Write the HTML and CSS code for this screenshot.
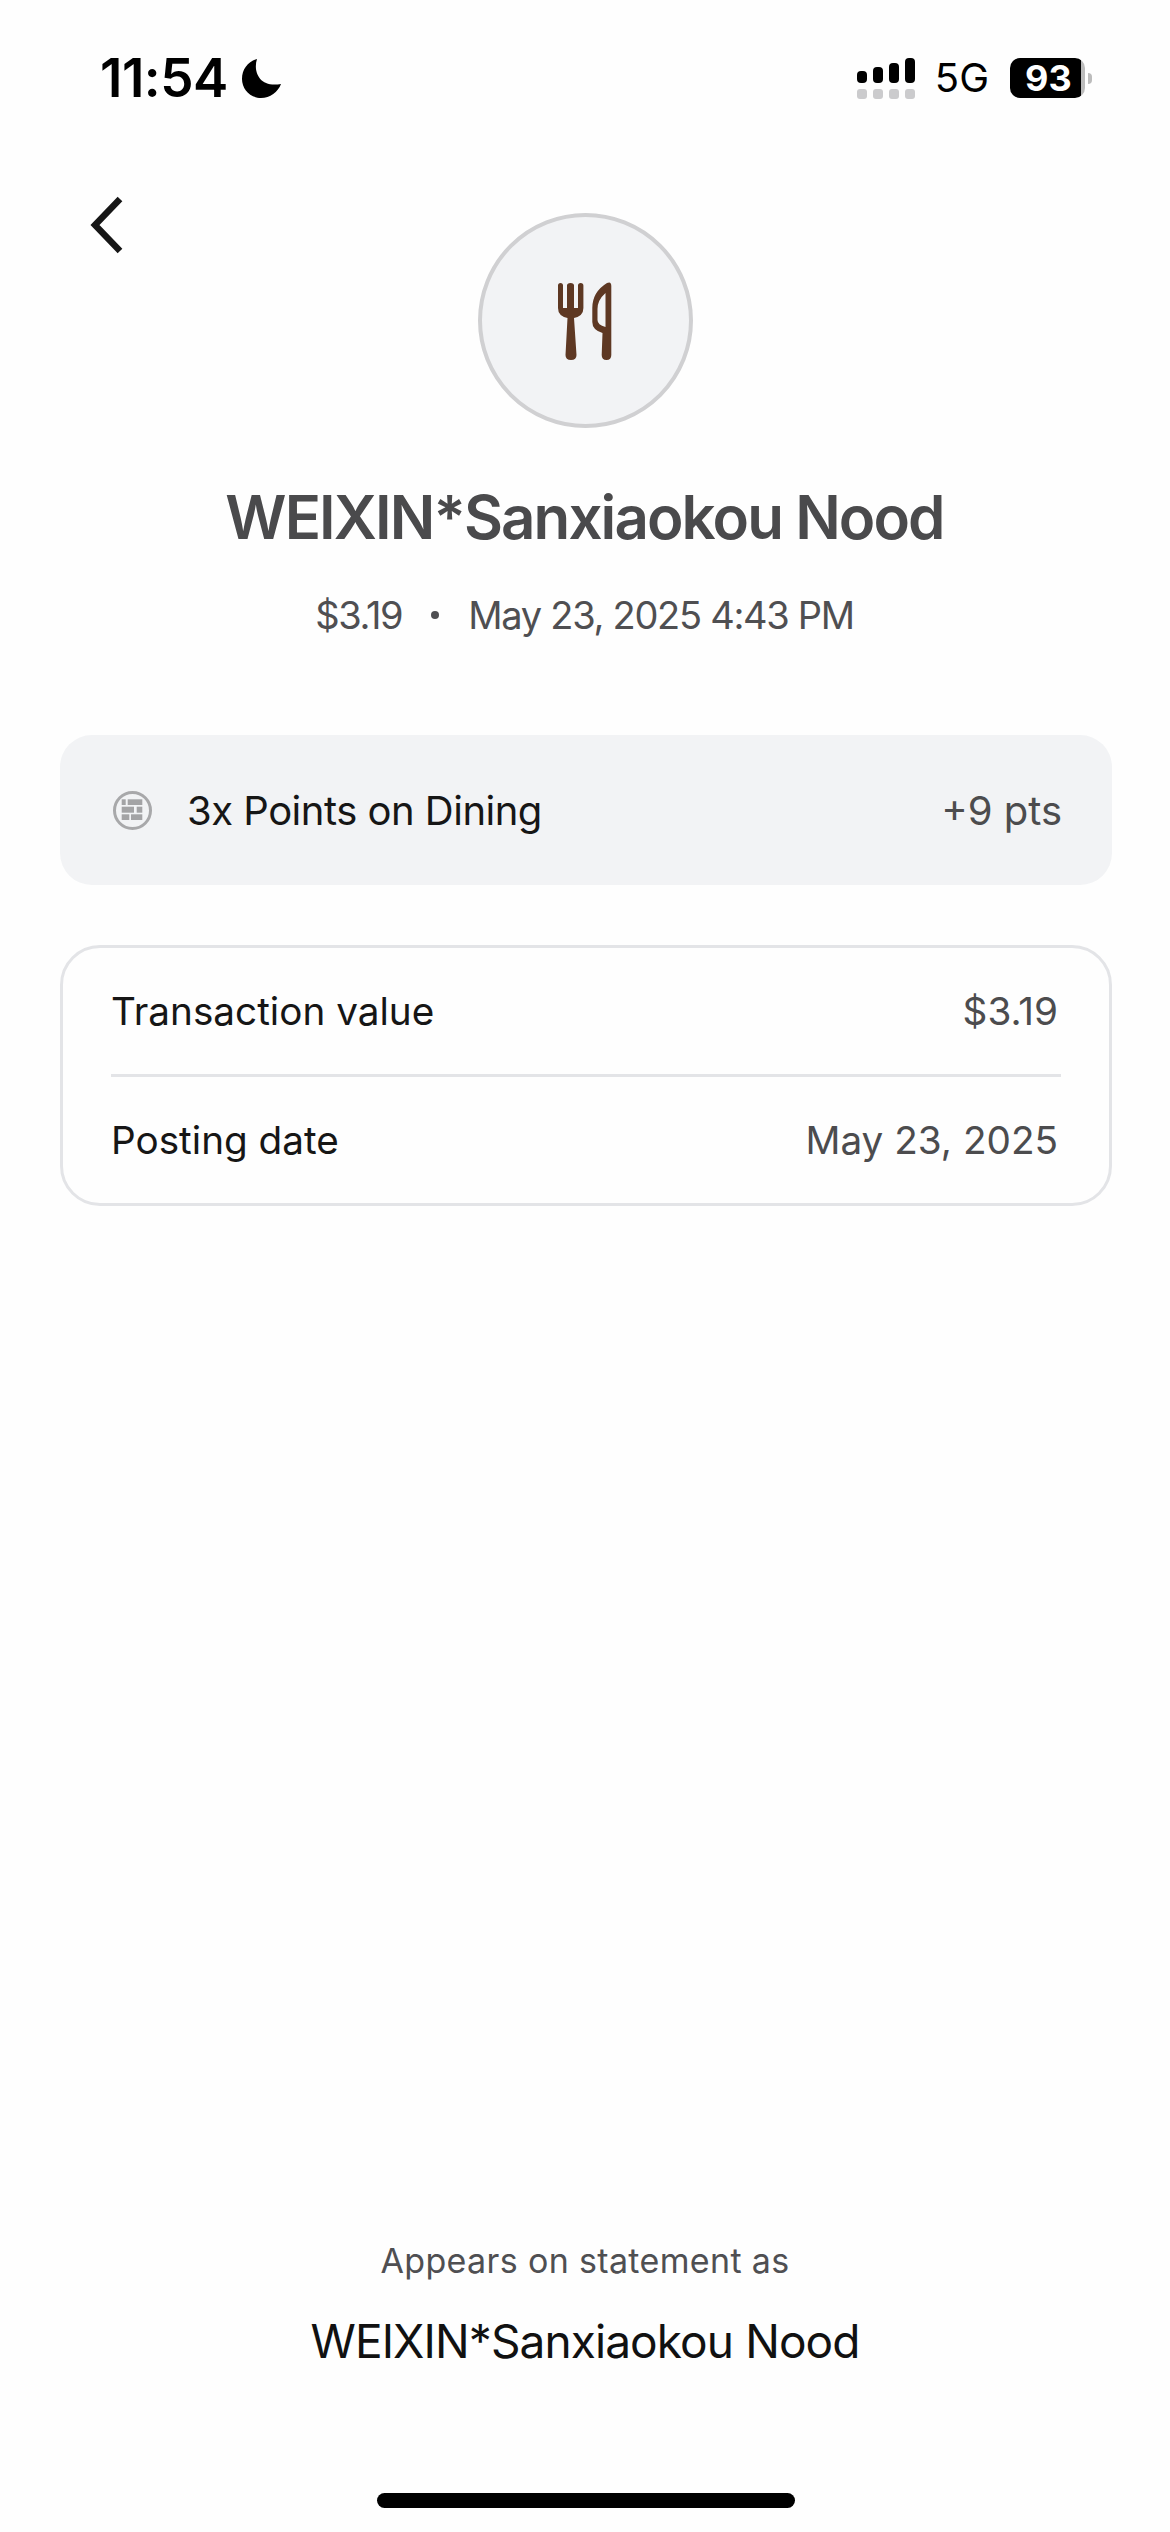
FILE: index.html
```html
<!DOCTYPE html>
<html lang="en">
<head>
<meta charset="utf-8">
<title>Transaction</title>
<link rel="stylesheet" href="styles.css">
</head>
<body>
<div class="page">
  <header class="status">
    <div class="status-left">
      <span class="time">11:54</span>
      <svg class="moon" viewBox="0 0 39 39"><path d="M15 0C11 12 17 29 39 25C36 33 28 39 19 39C8 39 0 30 0 20C0 10 6 3 15 0Z"/></svg>
    </div>
    <div class="status-right">
      <svg class="signal" viewBox="0 0 58 41">
        <rect x="0" y="13" width="10" height="12" rx="4"/><rect x="16" y="9" width="10" height="16" rx="4"/><rect x="32" y="5" width="10" height="20" rx="4"/><rect x="48" y="0" width="10" height="25" rx="4"/>
        <g class="signal-off"><rect x="0" y="31" width="10" height="10" rx="3"/><rect x="16" y="31" width="10" height="10" rx="3"/><rect x="32" y="31" width="10" height="10" rx="3"/><rect x="48" y="31" width="10" height="10" rx="3"/></g>
      </svg>
      <span class="network">5G</span>
      <span class="battery">93</span>
    </div>
  </header>

  <nav class="nav">
    <svg class="back" viewBox="0 0 36 58"><path d="M30 3L5 29L30 55"/></svg>
    <div class="avatar">
      <svg class="cutlery" viewBox="0 0 54 78">
        <path d="M0 3.5Q0 1 2.5 1Q5 1 5 3.5V26H9V3.5Q9 1 12.5 1Q16 1 16 3.5V26H20V3.5Q20 1 22.7 1Q25.4 1 25.4 3.5V26Q25.4 34 16 36L18.5 73Q18.5 78 13 78Q7.5 78 7.5 73L9.5 36Q0 34 0 26Z"/>
        <path fill-rule="evenodd" d="M49 1Q53.3-1 53.3 4V73Q53.3 78 48.5 78Q43.7 78 43.7 73L44.5 51Q34.3 48 34.3 40V26Q34.3 10 49 1ZM47.5 11Q39.5 18 39.5 27V38Q39.5 43 47.5 45Z"/>
      </svg>
    </div>
    <span></span>
  </nav>

  <main class="main">
    <h1 class="title">WEIXIN*Sanxiaokou Nood</h1>
    <p class="meta"><span>$3.19</span><span class="dot"></span><span>May 23, 2025 4:43 PM</span></p>

    <section class="points">
      <div class="points-left">
        <svg class="points-icon" viewBox="0 0 39 39">
          <circle class="ring" cx="19.5" cy="19.5" r="18"/>
          <rect x="8.7" y="8.3" width="4" height="5.7"/><rect x="14.7" y="8.3" width="14.6" height="5.7"/>
          <rect x="8.7" y="15.7" width="12.3" height="6"/><rect x="23.7" y="15.7" width="5.6" height="6"/>
          <rect x="8.7" y="23.3" width="7.6" height="5.7"/><rect x="18" y="23.3" width="11.3" height="5.7"/>
        </svg>
        <span class="points-label">3x Points on Dining</span>
      </div>
      <span class="points-value">+9 pts</span>
    </section>

    <section class="card">
      <div class="row"><span class="label">Transaction value</span><span class="value">$3.19</span></div>
      <div class="divider"></div>
      <div class="row"><span class="label">Posting date</span><span class="value">May 23, 2025</span></div>
    </section>
  </main>

  <footer class="footer">
    <p class="appears">Appears on statement as</p>
    <p class="statement">WEIXIN*Sanxiaokou Nood</p>
    <div class="home"></div>
  </footer>
</div>
</body>
</html>
```

FILE: styles.css
```css
* { box-sizing: border-box; }
html, body { margin: 0; padding: 0; }
body { background: #fefefe; font-family: Inter, "Liberation Sans", sans-serif; color: #161616; }
.page { width: 1170px; height: 2532px; display: flex; flex-direction: column; overflow: hidden; }

.status { height: 156px; padding: 0 85px 0 100px; display: flex; justify-content: space-between; align-items: center; flex: none; }
.status-left { display: flex; align-items: center; gap: 14px; }
.time { font-size: 53px; font-weight: 600; line-height: 60px; color: #000; letter-spacing: -0.5px; }
.moon { width: 39px; height: 39px; fill: #000; }
.status-right { display: flex; align-items: center; }
.signal { width: 58px; height: 41px; fill: #000; }
.signal-off { fill: #cbcbcd; }
.network { font-size: 40px; line-height: 40px; color: #000; margin-left: 20px; margin-right: 21px; }
.battery { position: relative; width: 75px; height: 40px; border-radius: 10px; background: linear-gradient(to right, #000 71px, #bcbcbc 71px); color: #fff; font-size: 36px; font-weight: 700; line-height: 40px; padding-left: 15px; }
.battery::after { content: ""; position: absolute; left: 78px; top: 15px; width: 4px; height: 11px; border-radius: 0 6px 6px 0; background: #bcbcbc; }

.nav { display: grid; grid-template-columns: 1fr auto 1fr; padding-top: 40px; flex: none; }
.back { width: 36px; height: 58px; margin-left: 90px; fill: none; stroke: #161616; stroke-width: 6.5; }
.avatar { width: 215px; height: 215px; margin-top: 17px; border-radius: 50%; background: #f2f3f5; border: 4px solid #d0d0d2; display: flex; align-items: center; justify-content: center; }
.cutlery { width: 54px; height: 78px; fill: #5e3823; }

.main { padding: 0 58px 0 60px; flex: none; }
.title { margin: 53px 0 0; padding-right: 3px; font-size: 60px; line-height: 72px; font-weight: 600; color: #4a4a4c; text-align: center; letter-spacing: -1.9px; }
.meta { margin: 39px 0 0; padding-right: 3px; font-size: 38px; line-height: 46px; color: #4f4f52; display: flex; justify-content: center; align-items: center; gap: 29px; letter-spacing: -1.3px; }
.dot { width: 8px; height: 8px; border-radius: 50%; background: #4f4f52; }

.points { margin-top: 97px; height: 150px; border-radius: 32px; background: #f2f3f5; display: flex; align-items: center; justify-content: space-between; padding: 0 50px 0 53px; }
.points-left { display: flex; align-items: center; gap: 35px; }
.points-icon { width: 39px; height: 39px; fill: #a3a3a5; }
.ring { fill: none; stroke: #a8a8aa; stroke-width: 3; }
.points-label { padding-top: 2px; font-size: 40px; line-height: 48px; color: #161616; letter-spacing: -0.5px; }
.points-value { padding-top: 2px; font-size: 40px; line-height: 48px; color: #4c4c4e; }

.card { margin-top: 60px; height: 261px; border: 3px solid #e3e4e7; border-radius: 40px; padding: 0 48px; }
.row { height: 126px; display: flex; align-items: center; justify-content: space-between; font-size: 38.7px; }
.label { color: #161616; }
.value { color: #4c4c4e; margin-right: 3px; }
.divider { height: 3px; background: #e3e4e7; }

.footer { margin-top: auto; display: flex; flex-direction: column; align-items: center; padding-bottom: 24px; }
.appears { margin: 0; font-size: 34px; line-height: 42px; color: #4f4f52; letter-spacing: 0.35px; }
.statement { margin: 31px 0 0; font-size: 46px; line-height: 56px; color: #111; letter-spacing: -0.9px; }
.home { margin: 124px 0 0 2px; width: 418px; height: 15px; border-radius: 8px; background: #000; }
```
